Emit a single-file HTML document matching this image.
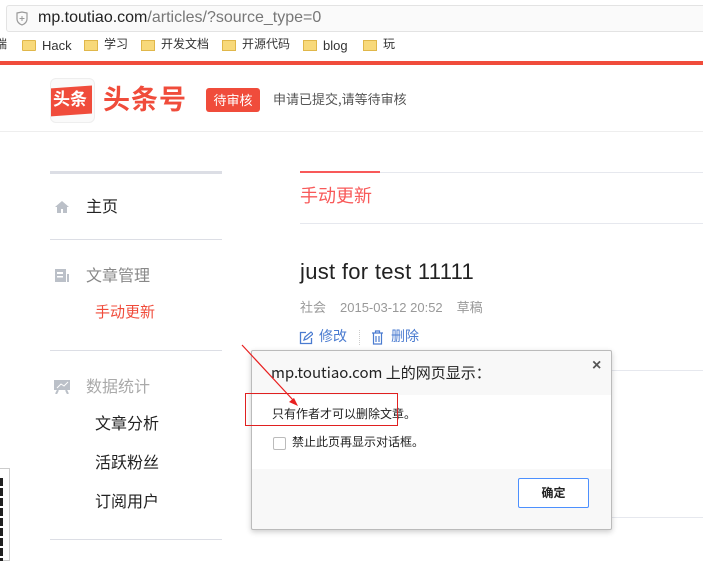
<!DOCTYPE html>
<html><head><meta charset="utf-8"><style>
*{margin:0;padding:0;box-sizing:border-box}
body{width:703px;height:561px;overflow:hidden;background:#fff;font-family:"Liberation Sans","Noto Sans CJK SC",sans-serif;position:relative}
.a{position:absolute;white-space:nowrap}
.line{position:absolute;height:1px;background:#e4e6eb}
.cn{font-family:"Noto Sans CJK SC","Liberation Sans",sans-serif;line-height:1.2}
</style></head><body>
<div class="a" style="left:6px;top:5px;width:700px;height:27px;border:1px solid #e3e3e3;border-radius:3px;background:#fafafa"></div>
<svg class="a" style="left:16px;top:11px" width="12" height="15" viewBox="0 0 12 15"><path d="M1 2 L6 1 L11 2 L11 8 Q11 12 6 14 Q1 12 1 8Z" fill="none" stroke="#999" stroke-width="1.2"/><path d="M6 5v5M3.5 7.5h5" stroke="#999"/></svg>
<div class="a" style="left:38px;top:9px;font-size:16px;color:#222">mp.toutiao.com<span style="color:#777">/articles/?source_type=0</span></div>
<div class="a cn" style="left:0;top:37px;font-size:12px;color:#333;width:703px;height:20px">
<span class="a" style="left:-5px;top:0">端</span>
<span class="a" style="left:22px;top:3px;width:14px;height:11px;background:#f8d97a;border:1px solid #e0b74a;border-radius:1px"></span><span class="a" style="left:42px;top:1px;font-family:'Liberation Sans';font-size:13px">Hack</span>
<span class="a" style="left:84px;top:3px;width:14px;height:11px;background:#f8d97a;border:1px solid #e0b74a"></span><span class="a" style="left:104px;top:0">学习</span>
<span class="a" style="left:141px;top:3px;width:14px;height:11px;background:#f8d97a;border:1px solid #e0b74a"></span><span class="a" style="left:161px;top:0">开发文档</span>
<span class="a" style="left:222px;top:3px;width:14px;height:11px;background:#f8d97a;border:1px solid #e0b74a"></span><span class="a" style="left:242px;top:0">开源代码</span>
<span class="a" style="left:303px;top:3px;width:14px;height:11px;background:#f8d97a;border:1px solid #e0b74a"></span><span class="a" style="left:323px;top:1px;font-family:'Liberation Sans';font-size:13px">blog</span>
<span class="a" style="left:363px;top:3px;width:14px;height:11px;background:#f8d97a;border:1px solid #e0b74a"></span><span class="a" style="left:383px;top:0">玩</span>
</div>
<div class="a" style="left:0;top:61px;width:703px;height:4px;background:#f04c3b"></div>
<div class="a" style="left:50px;top:78px;width:45px;height:45px;border:1px solid #eee;border-radius:6px;background:#fafafa;overflow:hidden">
<div class="a" style="left:-1px;top:8px;width:42px;height:28px;background:#f04c3b;transform:skewY(-4deg)"></div>
<div class="a cn" style="left:2px;top:9px;font-size:17px;font-weight:bold;color:#fff">头条</div></div>
<div class="a cn" style="left:103px;top:82px;font-size:27px;font-weight:bold;color:#f04c3b;letter-spacing:1px">头条号</div>
<div class="a cn" style="left:206px;top:88px;width:54px;height:24px;background:#f04c3b;border-radius:3px;color:#fff;font-size:13px;text-align:center;line-height:24px">待审核</div>
<div class="a cn" style="left:273px;top:91px;font-size:13px;color:#555">申请已提交,请等待审核</div>
<div class="line" style="left:0;top:131px;width:703px;background:#eee"></div>
<div class="a" style="left:50px;top:171px;width:172px;height:3px;background:#dcdee5"></div>
<svg class="a" style="left:54px;top:200px" width="16" height="14"><path d="M8 1L1 7h2v6h4v-4h2v4h4V7h2z" fill="#bbc0c8"/></svg>
<div class="a cn" style="left:86px;top:196px;font-size:16px;color:#222">主页</div>
<div class="line" style="left:50px;top:239px;width:172px;background:#dcdee5"></div>
<svg class="a" style="left:54px;top:268px" width="17" height="15"><rect x="1" y="1" width="11" height="13" fill="#bbc0c8"/><rect x="3" y="4" width="6" height="2" fill="#fff"/><rect x="3" y="8" width="6" height="1.5" fill="#fff"/><rect x="13" y="6" width="2" height="8" fill="#bbc0c8"/></svg>
<div class="a cn" style="left:86px;top:265px;font-size:16px;color:#888">文章管理</div>
<div class="a cn" style="left:95px;top:303px;font-size:15px;color:#f04c3b">手动更新</div>
<div class="line" style="left:50px;top:350px;width:172px;background:#dcdee5"></div>
<svg class="a" style="left:53px;top:378px" width="18" height="16"><rect x="1" y="2" width="16" height="10" fill="#bbc0c8"/><path d="M4 10l4-4 3 2 4-4" stroke="#fff" fill="none"/><path d="M5 12l-2 4M13 12l2 4" stroke="#bbc0c8" stroke-width="2"/></svg>
<div class="a cn" style="left:86px;top:376px;font-size:16px;color:#aaa">数据统计</div>
<div class="a cn" style="left:95px;top:413px;font-size:16px;color:#222">文章分析</div>
<div class="a cn" style="left:95px;top:452px;font-size:16px;color:#222">活跃粉丝</div>
<div class="a cn" style="left:95px;top:491px;font-size:16px;color:#222">订阅用户</div>
<div class="line" style="left:50px;top:539px;width:172px;background:#dcdee5"></div>
<div class="a" style="left:-2px;top:468px;width:12px;height:93px;border:1px solid #ccc;background:#fff"></div>
<div class="a" style="left:0;top:478px;width:3px;height:83px;background:repeating-linear-gradient(#222 0 8px,#fff 8px 10px)"></div>
<div class="line" style="left:300px;top:172px;width:403px;background:#e6e8ee"></div>
<div class="a" style="left:300px;top:171px;width:80px;height:2px;background:#f85959"></div>
<div class="a cn" style="left:300px;top:185px;font-size:18px;color:#f85959">手动更新</div>
<div class="line" style="left:300px;top:223px;width:403px;background:#e6e8ee"></div>
<div class="a" style="left:300px;top:259px;font-size:22px;color:#222;letter-spacing:0.3px">just for test 11111</div>
<div class="a cn" style="left:300px;top:299px;font-size:13px;color:#999">社会<span style="margin-left:14px;font-family:'Liberation Sans'">2015-03-12 20:52</span><span style="margin-left:14px">草稿</span></div>
<svg class="a" style="left:299px;top:331px" width="14" height="14"><path d="M7 1.5H1.5v11h11V7" fill="none" stroke="#4a7bd0" stroke-width="1.3"/><path d="M5 9l1-3 6-5 2 2-6 5z" fill="none" stroke="#4a7bd0" stroke-width="1.2"/></svg>
<div class="a cn" style="left:319px;top:328px;font-size:14px;color:#4a7bd0">修改</div>
<div class="a" style="left:359px;top:330px;height:15px;border-left:1px dotted #ccc"></div>
<svg class="a" style="left:371px;top:330px" width="13" height="15"><path d="M1 3h11M4.5 3V1h4v2M2.5 3v11h8V3M5 6v6M8 6v6" fill="none" stroke="#4a7bd0" stroke-width="1.2"/></svg>
<div class="a cn" style="left:391px;top:328px;font-size:14px;color:#4a7bd0">删除</div>
<div class="line" style="left:611px;top:370px;width:92px;background:#e6e8ee"></div>
<div class="line" style="left:611px;top:517px;width:92px;background:#e6e8ee"></div>
<div class="a" style="left:251px;top:350px;width:361px;height:180px;border:1px solid #bbb;border-radius:2px;background:#f8f8f8;box-shadow:0 2px 6px rgba(0,0,0,.2)">
<div class="a" style="left:0;top:44px;width:359px;height:74px;background:#fff"></div>
<div class="a cn" style="left:19px;top:13px;font-size:15px;color:#222">mp.toutiao.com 上的网页显示：</div>
<div class="a" style="left:340px;top:6px;font-size:16px;color:#555;font-weight:bold">×</div>
<div class="a cn" style="left:20px;top:56px;font-size:12px;color:#222">只有作者才可以删除文章。</div>
<div class="a" style="left:21px;top:86px;width:13px;height:13px;border:1px solid #bbb;border-radius:2px;background:#fff"></div>
<div class="a cn" style="left:40px;top:84px;font-size:12px;color:#222">禁止此页再显示对话框。</div>
<div class="a cn" style="left:266px;top:127px;width:71px;height:30px;border:1px solid #4d90fe;border-radius:2px;background:#fff;text-align:center;line-height:28px;font-size:12px;font-weight:bold;color:#222">确定</div>
</div>
<div class="a" style="left:245px;top:393px;width:153px;height:33px;border:1px solid #e02020"></div>
<svg class="a" style="left:0;top:0" width="703" height="561"><line x1="242" y1="345" x2="293" y2="400" stroke="#e82020" stroke-width="1.2"/><path d="M298 406l-9-4 5-4z" fill="#e82020"/></svg>
</body></html>
